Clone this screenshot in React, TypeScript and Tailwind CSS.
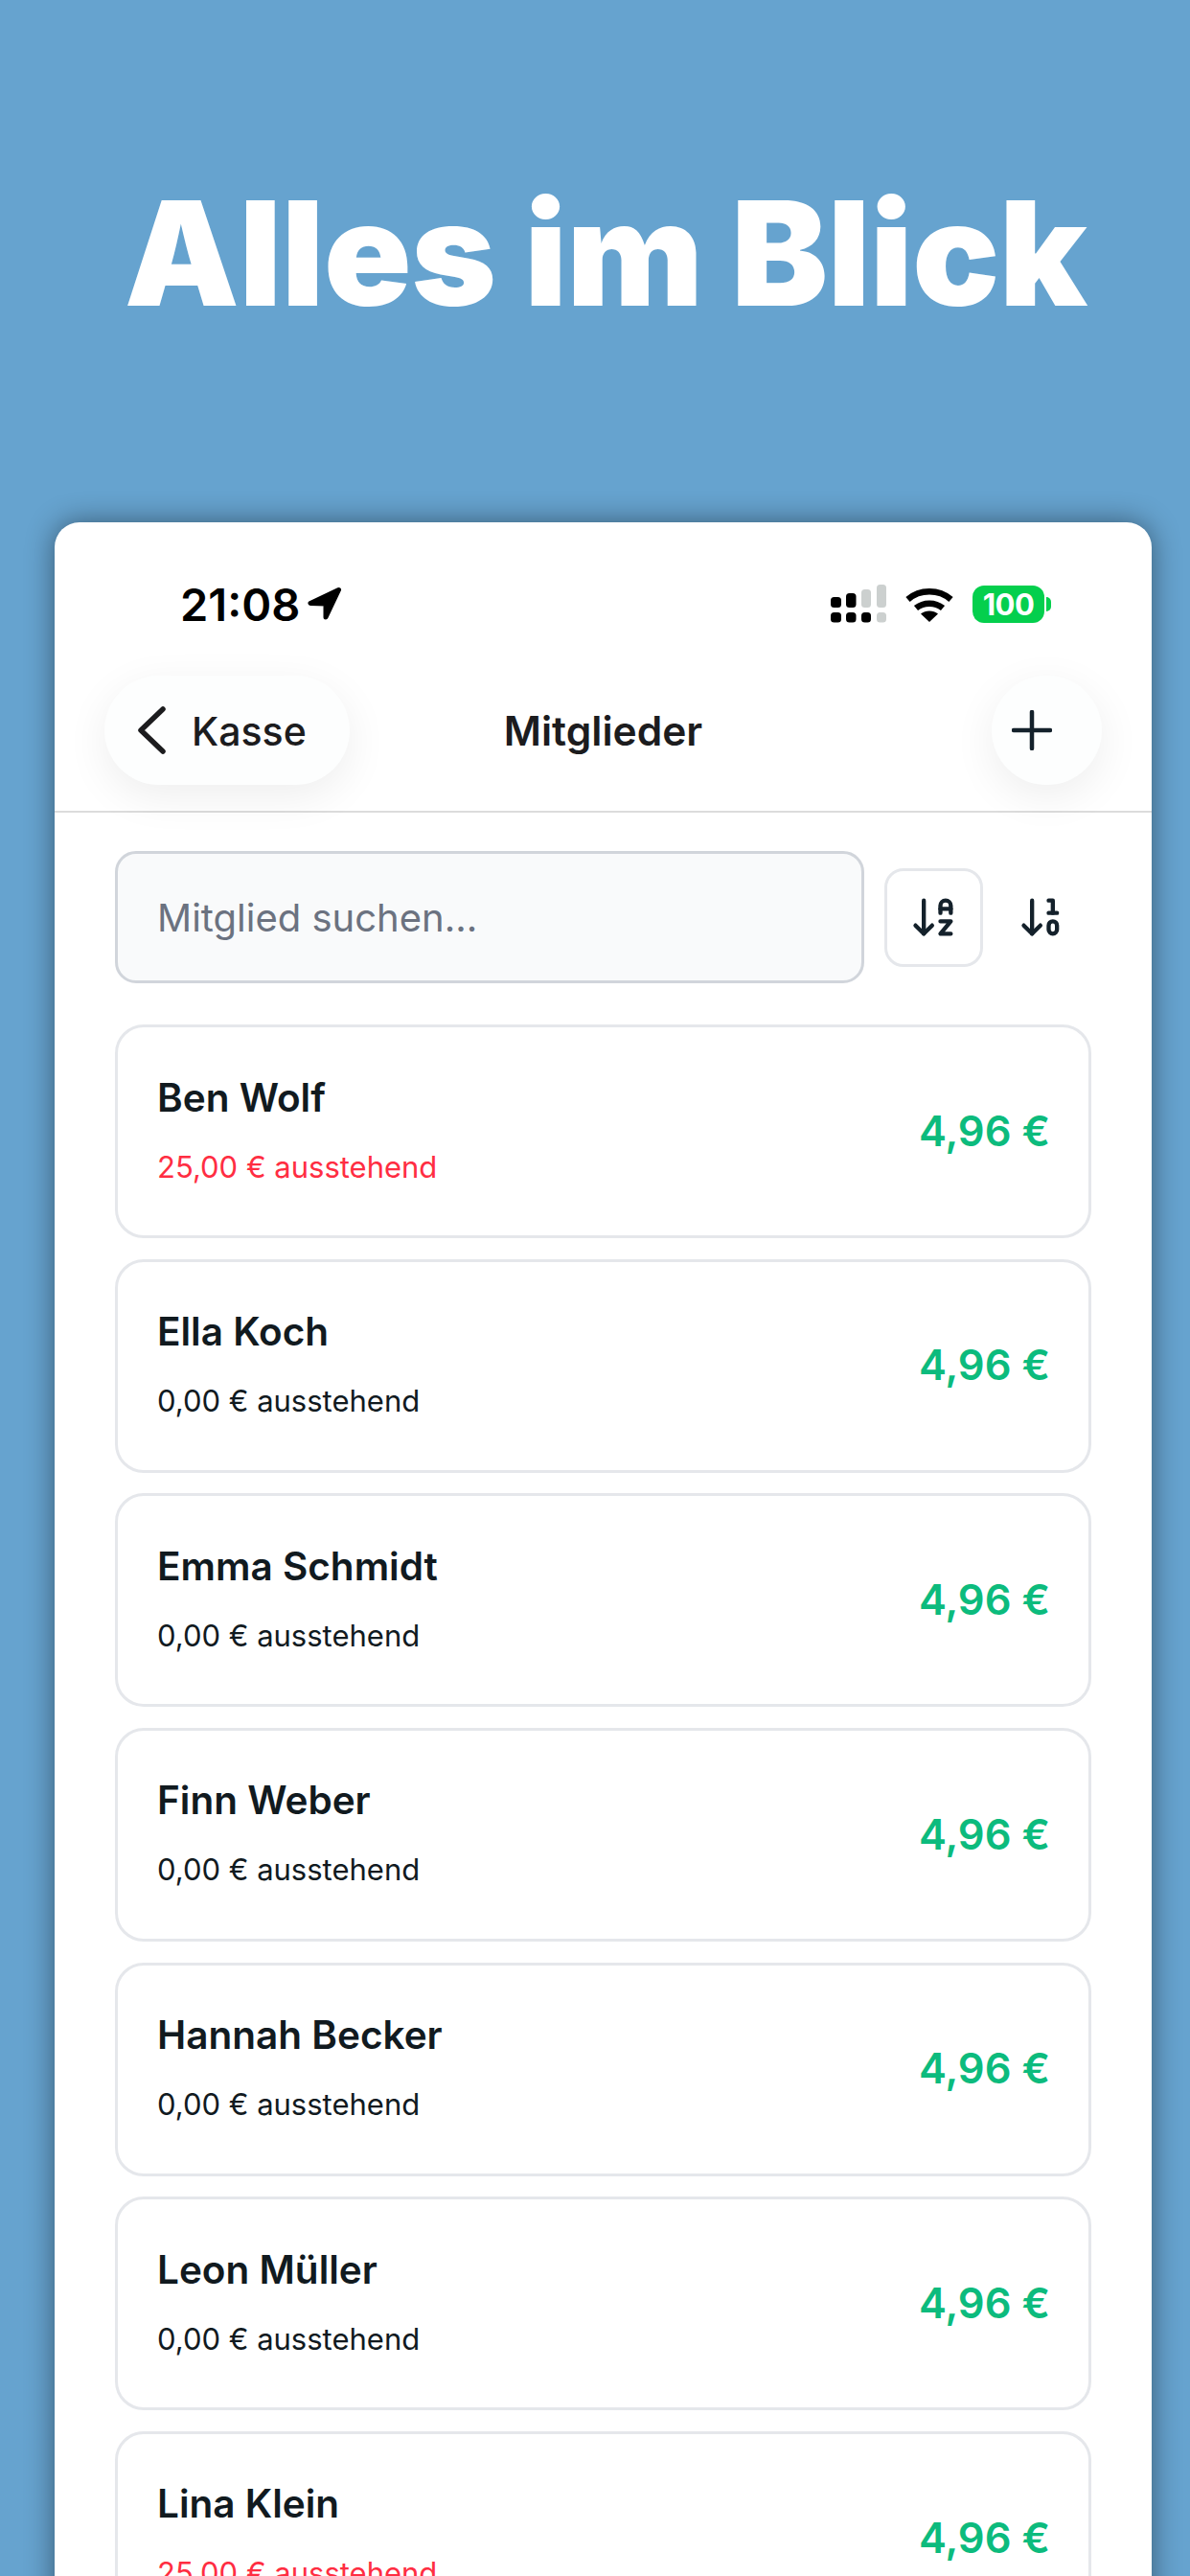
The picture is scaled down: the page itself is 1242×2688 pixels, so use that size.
import React from 'react';
import { ArrowDown10, ArrowDownAZ } from 'lucide-react';

type Member = { name: string; pending: string; overdue?: boolean };

const members: Member[] = [
  { name: 'Ben Wolf', pending: '25,00 € ausstehend', overdue: true },
  { name: 'Ella Koch', pending: '0,00 € ausstehend' },
  { name: 'Emma Schmidt', pending: '0,00 € ausstehend' },
  { name: 'Finn Weber', pending: '0,00 € ausstehend' },
  { name: 'Hannah Becker', pending: '0,00 € ausstehend' },
  { name: 'Leon Müller', pending: '0,00 € ausstehend' },
  { name: 'Lina Klein', pending: '25,00 € ausstehend', overdue: true },
];

const SignalIcon = () => (
  <svg width="58" height="40" viewBox="0 0 58 40">
    <rect x="0" y="13" width="11" height="11" rx="3.5" fill="#000" />
    <rect x="16" y="9" width="10.5" height="15" rx="3.5" fill="#000" />
    <rect x="32" y="5" width="10" height="19" rx="3.5" fill="#ccd0cf" />
    <rect x="48" y="0" width="10" height="24" rx="3.5" fill="#ccd0cf" />
    <rect x="0" y="29" width="11" height="10.5" rx="3.5" fill="#000" />
    <rect x="16" y="29" width="10.5" height="10.5" rx="3.5" fill="#000" />
    <rect x="32" y="29" width="10" height="10.5" rx="3.5" fill="#000" />
    <rect x="48" y="29" width="10" height="10.5" rx="3.5" fill="#ccd0cf" />
  </svg>
);

const WifiIcon = () => (
  <svg width="50" height="37" viewBox="0 0 50 37">
    <path d="M2.5 13.5C15 2.5 35 2.5 47.5 13.5" fill="none" stroke="#000" strokeWidth="6.5" />
    <path d="M11 22.5C19 16 31 16 39 22.5" fill="none" stroke="#000" strokeWidth="6.5" />
    <path d="M16 28.5C21 24.5 29 24.5 34 28.5L25 37Z" fill="#000" />
  </svg>
);

const Battery = () => (
  <div className="flex items-center gap-[2px]">
    <div className="w-[75px] h-[39px] rounded-[12px] bg-[#04cf4d] flex items-center justify-center text-white text-[31px] font-bold leading-none tracking-[-0.5px]">
      100
    </div>
    <div className="w-[5px] h-[15px] rounded-r-full bg-[#04cf4d]" />
  </div>
);

export default function App() {
  return (
    <div className="h-[2688px] w-[1242px] overflow-hidden bg-[#66a3cf] flex flex-col font-['Inter',sans-serif]">
      <div className="h-[545px] shrink-0 pt-[187px] pl-[22px] flex justify-center">
        <h1 className="text-white text-[151px] font-black leading-[154px] tracking-[-0.4px]">Alles im Blick</h1>
      </div>

      <div className="ml-[57px] mr-[40px] flex-1 bg-white rounded-t-[26px] shadow-[0_0_30px_rgba(0,0,0,0.45)]">
        {/* Status bar */}
        <div className="pt-[60px] pb-[51px] pl-[131px] pr-[105px] flex justify-between">
          <div className="h-[50px] flex items-center gap-[8px]">
            <span className="text-black text-[47px] font-semibold leading-none">21:08</span>
            <svg width="36" height="36" viewBox="0 0 36 36">
              <path d="M32.5 3.5L3 17.5L19 18L19 32Z" fill="#000" stroke="#000" strokeWidth="5" strokeLinejoin="round" />
            </svg>
          </div>
          <div className="h-[50px] flex items-center gap-[20px]">
            <SignalIcon />
            <WifiIcon />
            <Battery />
          </div>
        </div>

        {/* Nav */}
        <div className="h-[142px] pb-[28px] px-[52px] flex items-center border-b-2 border-[#dcdcdc]">
          <div className="flex-1">
            <button className="w-[256px] h-[114px] rounded-full bg-[#fdfefe] shadow-[0_12px_45px_rgba(0,0,0,0.07)] pl-[34px] flex items-center gap-[27px]">
              <svg width="30" height="50" viewBox="0 0 30 50">
                <path d="M27 3L4 25L27 47" fill="none" stroke="#1c1c1e" strokeWidth="5.5" strokeLinecap="round" strokeLinejoin="round" />
              </svg>
              <span className="pt-[2px] text-[#1c1c1e] text-[41px] font-medium leading-none">Kasse</span>
            </button>
          </div>
          <h2 className="pt-[2px] text-[#1c1c1e] text-[42.5px] font-semibold leading-none">Mitglieder</h2>
          <div className="flex-1 flex justify-end">
            <button className="w-[115px] h-[114px] rounded-full bg-[#fdfefe] shadow-[0_12px_45px_rgba(0,0,0,0.07)] pl-[21px] flex items-center">
              <svg width="42" height="42" viewBox="0 0 42 42">
                <path d="M21 2V40M2 21H40" fill="none" stroke="#14212b" strokeWidth="4.5" strokeLinecap="round" />
              </svg>
            </button>
          </div>
        </div>

        {/* Search + sort */}
        <div className="px-[63px] pt-[40px] flex items-center">
          <input
            placeholder="Mitglied suchen..."
            className="flex-1 min-w-0 h-[138px] px-[41px] rounded-[22px] border-[3px] border-[#d1d5db] bg-[#f9fafb] text-[40px] placeholder:text-[#6b7280]"
          />
          <button className="ml-[21px] w-[103px] h-[103px] rounded-[20px] border-[3px] border-[#e5e7eb] flex items-center justify-center text-[#14212b]">
            <ArrowDownAZ size={52} />
          </button>
          <button className="ml-[10px] w-[103px] h-[103px] flex items-center justify-center text-[#14212b]">
            <ArrowDown10 size={52} />
          </button>
        </div>

        {/* Member list */}
        <div className="px-[63px] pt-[43px] flex flex-col gap-[21.67px]">
          {members.map((m) => (
            <div
              key={m.name}
              className="h-[223px] shrink-0 pl-[41px] pr-[40px] rounded-[30px] border-[3px] border-[#e5e7eb] flex items-center justify-between"
            >
              <div className="mb-[3px] flex flex-col gap-[27px]">
                <span className="text-[#111a1f] text-[40.5px] font-semibold leading-[50px]">{m.name}</span>
                <span className={`text-[31px] leading-[40px] ${m.overdue ? 'text-[#ff2d42]' : 'text-[#111a1f]'}`}>{m.pending}</span>
              </div>
              <span className="text-[#0cbb7d] text-[43.5px] font-semibold leading-none">4,96 €</span>
            </div>
          ))}
        </div>
      </div>
    </div>
  );
}
